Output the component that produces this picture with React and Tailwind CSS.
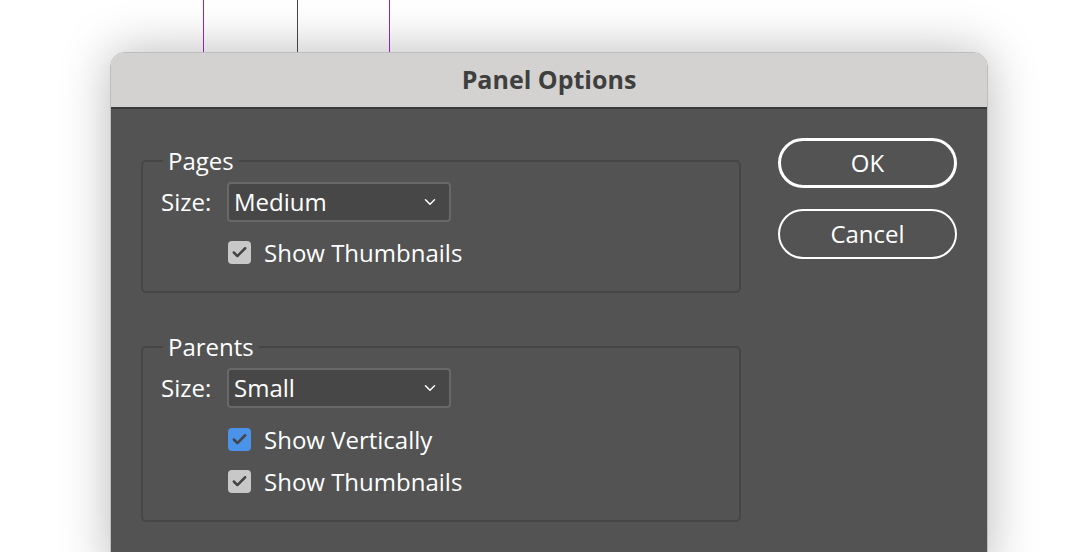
import { ChevronDown, Check } from "lucide-react";

const font = { fontFamily: '"Open Sans", "Noto Sans", sans-serif' };

const Select = ({ value }) => (
  <div className="flex items-center justify-between w-[224px] h-[40px] rounded-[4px] bg-[#474747] border-2 border-[#686868] pl-[5px] pr-[10px]">
    <span className="text-[24px] text-white leading-none">{value}</span>
    <ChevronDown size={18} strokeWidth={2} className="text-white" />
  </div>
);

const CheckRow = ({ label, blue }) => (
  <div className="flex items-center gap-[13px] h-[23px]">
    <div
      className={
        blue
          ? "w-[23px] h-[23px] rounded-[4px] bg-[#4a93e8] flex items-center justify-center"
          : "w-[23px] h-[23px] rounded-[4px] bg-[#c8c8c8] flex items-center justify-center"
      }
    >
      <Check size={17} strokeWidth={3.5} className="text-[#444]" />
    </div>
    <span className="text-[24px] text-white leading-none">{label}</span>
  </div>
);

const Group = ({ title, size, children, spaced }) => (
  <fieldset className="w-[600px] border-2 border-[#464646] rounded-[5px] pl-[18px] pt-[9px] pb-[27px]">
    <legend className="ml-[2px] px-[5px] text-[24px] leading-[24px] text-white">{title}</legend>
    <div className="flex items-center">
      <span className="w-[66px] text-[24px] text-white leading-none">Size:</span>
      <Select value={size} />
    </div>
    <div
      className={
        spaced
          ? "flex flex-col gap-[19px] mt-[20px] ml-[67px]"
          : "flex flex-col gap-[18px] mt-[19px] ml-[67px]"
      }
    >
      {children}
    </div>
  </fieldset>
);

export default function App() {
  return (
    <div className="w-[1074px] h-[552px] bg-white overflow-hidden" style={font}>
      <div className="flex h-[52px]">
        <div className="ml-[203px] w-px h-full bg-[#8f22d0]" />
        <div className="ml-[93px] w-px h-full bg-[#444]" />
        <div className="ml-[91px] w-px h-full bg-[#8f22d0]" />
      </div>
      <div className="ml-[110px] w-[878px] h-[520px] rounded-t-[14px] overflow-hidden shadow-[0_0_50px_rgba(0,0,0,0.28)] border border-[#bdbdbd]">
        <div className="h-[56px] bg-[#d3d2d0] border-b-2 border-[#3a3a3a] flex items-center justify-center">
          <span className="text-[25px] font-bold text-[#3f3f3f]">Panel Options</span>
        </div>
        <div className="bg-[#535353] h-full flex pl-[30px] pt-[29px]">
          <div className="flex flex-col gap-[42px] mt-[11px]">
            <Group title="Pages" size="Medium">
              <CheckRow label="Show Thumbnails" />
            </Group>
            <Group title="Parents" size="Small" spaced>
              <CheckRow label="Show Vertically" blue />
              <CheckRow label="Show Thumbnails" />
            </Group>
          </div>
          <div className="ml-[37px] flex flex-col gap-[21px]">
            <button className="w-[179px] h-[50px] rounded-full border-[3px] border-white text-white text-[24px]">OK</button>
            <button className="w-[179px] h-[50px] rounded-full border-2 border-white text-white text-[24px]">Cancel</button>
          </div>
        </div>
      </div>
    </div>
  );
}
